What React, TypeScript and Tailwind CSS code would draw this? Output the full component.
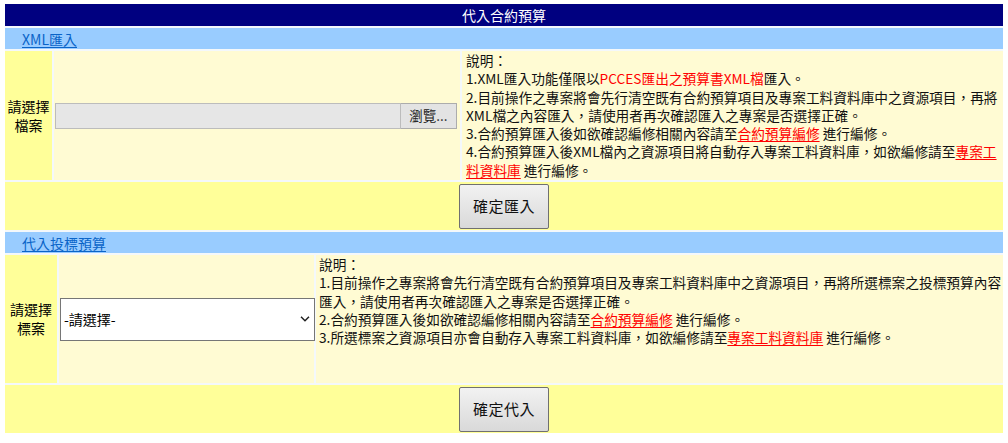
import React from 'react';

const font = { fontFamily: '"Noto Sans CJK TC", "Noto Sans", sans-serif' };

function SectionBar({ title }: { title: string }) {
  return (
    <div className="h-[21px] bg-[#99ccff] pl-[17px] flex items-center">
      <a href="#" className="text-[14px] leading-none text-[#0a64c8] underline underline-offset-2">
        {title}
      </a>
    </div>
  );
}

function Label({ lines, width }: { lines: string[]; width: string }) {
  return (
    <div className={`${width} shrink-0 bg-[#ffff99] flex flex-col items-center justify-center text-[14px] leading-[19px] text-black`}>
      {lines.map(l => (
        <span key={l}>{l}</span>
      ))}
    </div>
  );
}

function RedLink({ children }: { children: React.ReactNode }) {
  return (
    <a href="#" className="text-[#ff0000] underline underline-offset-2">
      {children}
    </a>
  );
}

function ActionRow({ label }: { label: string }) {
  return (
    <div className="h-[48px] bg-[#ffff99] flex items-center justify-center">
      <button className="w-[90px] h-[45px] border border-[#707070] rounded-[2px] bg-gradient-to-b from-[#f2f2f2] to-[#d9d9d9] text-[15px] text-[#111] tracking-[0.5px]">
        {label}
      </button>
    </div>
  );
}

export default function App() {
  return (
    <div className="min-h-[443px] bg-white pt-[4px] px-[5px]" style={font}>
      <div className="w-[998px] flex flex-col gap-[2px] bg-[#f4f8fb]">
        <div className="h-[22px] bg-[#000080] text-white text-[14px] flex items-center justify-center">
          代入合約預算
        </div>

        <SectionBar title="XML匯入" />

        <div className="h-[129px] flex gap-[2px]">
          <Label lines={['請選擇', '檔案']} width="w-[47px]" />
          <div className="w-[406px] shrink-0 bg-[#fffbd3] flex items-center pl-[1px]">
            <div className="flex h-[26px] w-[402px]">
              <div className="flex-1 bg-[#e6e6e6] border border-[#bcbcbc]" />
              <div className="w-[56px] bg-[#e3e3e3] border border-[#acacac] border-l-0 flex items-center justify-center text-[13.5px] text-[#222]">
                瀏覽...
              </div>
            </div>
          </div>
          <div className="flex-1 bg-[#fffbd3] pl-[4px] text-[13.7px] leading-[18.3px] text-[#111] whitespace-nowrap">
            說明：<br />
            1.XML匯入功能僅限以<span className="text-[#ff0000]">PCCES匯出之預算書XML檔</span>匯入。<br />
            2.目前操作之專案將會先行清空既有合約預算項目及專案工料資料庫中之資源項目，再將<br />
            XML檔之內容匯入，請使用者再次確認匯入之專案是否選擇正確。<br />
            3.合約預算匯入後如欲確認編修相關內容請至<RedLink>合約預算編修</RedLink> 進行編修。<br />
            4.合約預算匯入後XML檔內之資源項目將自動存入專案工料資料庫，如欲編修請至<RedLink>專案工</RedLink><br />
            <RedLink>料資料庫</RedLink> 進行編修。
          </div>
        </div>

        <ActionRow label="確定匯入" />

        <SectionBar title="代入投標預算" />

        <div className="h-[128px] flex gap-[2px]">
          <Label lines={['請選擇', '標案']} width="w-[52px]" />
          <div className="w-[255px] shrink-0 bg-[#fffbd3] flex items-center pl-[1px]">
            <div className="relative w-[255px] h-[43px] shrink-0 z-10">
              <select className="appearance-none w-full h-full border border-[#767676] bg-white pl-[3px] text-[14px] text-black outline-none">
                <option>-請選擇-</option>
              </select>
              <svg
                className="absolute right-[5px] top-1/2 -translate-y-1/2 pointer-events-none"
                width="10"
                height="7"
                viewBox="0 0 10 7"
                fill="none"
              >
                <path d="M1 1.2 L5 5.2 L9 1.2" stroke="#222" strokeWidth="1.5" />
              </svg>
            </div>
          </div>
          <div className="flex-1 bg-[#fffbd3] pl-[3px] text-[13.7px] leading-[18.3px] text-[#111] whitespace-nowrap">
            說明：<br />
            1.目前操作之專案將會先行清空既有合約預算項目及專案工料資料庫中之資源項目，再將所選標案之投標預算內容<br />
            匯入，請使用者再次確認匯入之專案是否選擇正確。<br />
            2.合約預算匯入後如欲確認編修相關內容請至<RedLink>合約預算編修</RedLink> 進行編修。<br />
            3.所選標案之資源項目亦會自動存入專案工料資料庫，如欲編修請至<RedLink>專案工料資料庫</RedLink> 進行編修。
          </div>
        </div>

        <ActionRow label="確定代入" />
      </div>
    </div>
  );
}
